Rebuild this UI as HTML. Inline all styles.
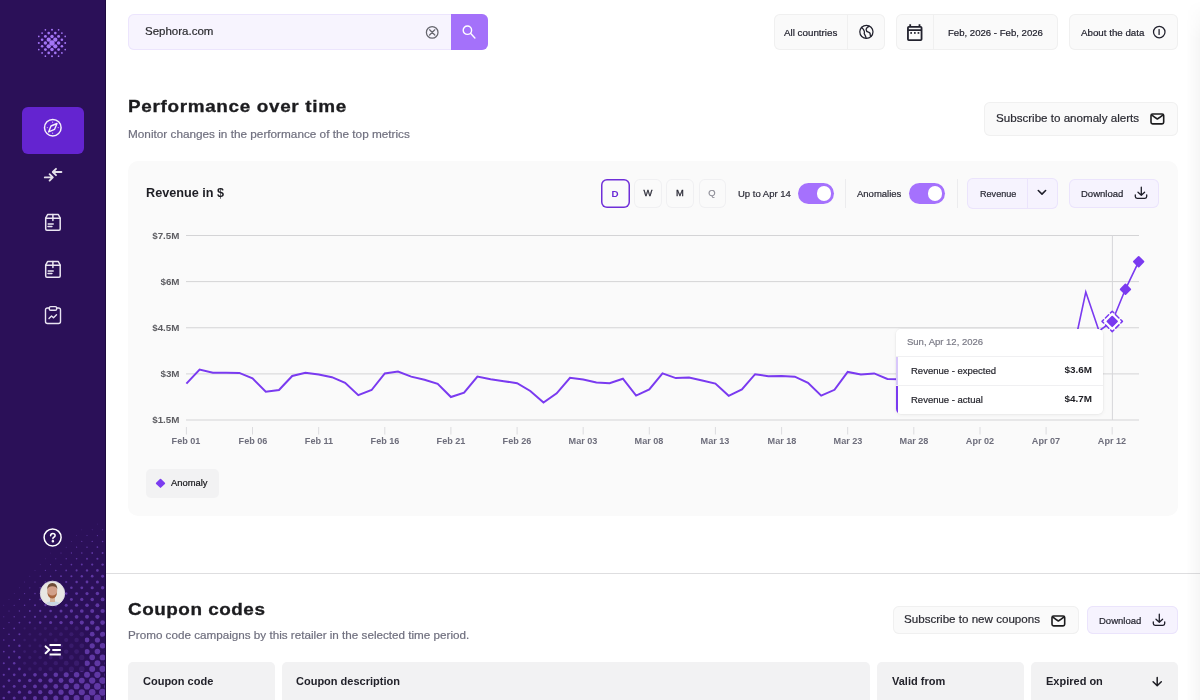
<!DOCTYPE html>
<html><head><meta charset="utf-8"><style>
html,body{margin:0;padding:0;}
body{width:1200px;height:700px;overflow:hidden;position:relative;background:#fff;font-family:"Liberation Sans", sans-serif;}
.t{position:absolute;white-space:nowrap;line-height:1;will-change:transform;}
.b{position:absolute;box-sizing:border-box;}
svg{position:absolute;overflow:visible;}
</style></head><body>
<div class="b" style="left:0px;top:0px;width:106px;height:700px;background:#2b1058;border-radius:0px;"></div><div class="b" style="left:105px;top:0px;width:1px;height:700px;background:#1d0a3f;border-radius:0px;"></div><svg style="left:0;top:0;overflow:hidden" width="105" height="700" viewBox="0 0 105 700"><g fill="#5f37a3"><circle cx="97.4" cy="524.0" r="0.37"/><circle cx="107.8" cy="524.0" r="0.45"/><circle cx="81.8" cy="529.8" r="0.33"/><circle cx="92.2" cy="529.8" r="0.43"/><circle cx="102.6" cy="529.8" r="0.53"/><circle cx="76.6" cy="535.6" r="0.38"/><circle cx="87.0" cy="535.6" r="0.50"/><circle cx="97.4" cy="535.6" r="0.60"/><circle cx="107.8" cy="535.6" r="0.69"/><circle cx="71.4" cy="541.4" r="0.43"/><circle cx="81.8" cy="541.4" r="0.55"/><circle cx="92.2" cy="541.4" r="0.66"/><circle cx="102.6" cy="541.4" r="0.76"/><circle cx="55.8" cy="547.2" r="0.33"/><circle cx="66.2" cy="547.2" r="0.47"/><circle cx="76.6" cy="547.2" r="0.60"/><circle cx="87.0" cy="547.2" r="0.72"/><circle cx="97.4" cy="547.2" r="0.83"/><circle cx="107.8" cy="547.2" r="0.92"/><circle cx="50.6" cy="553.0" r="0.36"/><circle cx="61.0" cy="553.0" r="0.51"/><circle cx="71.4" cy="553.0" r="0.65"/><circle cx="81.8" cy="553.0" r="0.77"/><circle cx="92.2" cy="553.0" r="0.89"/><circle cx="102.6" cy="553.0" r="0.99"/><circle cx="45.4" cy="558.8" r="0.39"/><circle cx="55.8" cy="558.8" r="0.54"/><circle cx="66.2" cy="558.8" r="0.69"/><circle cx="76.6" cy="558.8" r="0.82"/><circle cx="87.0" cy="558.8" r="0.95"/><circle cx="97.4" cy="558.8" r="1.06"/><circle cx="107.8" cy="558.8" r="1.16"/><circle cx="40.2" cy="564.6" r="0.40"/><circle cx="50.6" cy="564.6" r="0.56"/><circle cx="61.0" cy="564.6" r="0.72"/><circle cx="71.4" cy="564.6" r="0.86"/><circle cx="81.8" cy="564.6" r="0.99"/><circle cx="92.2" cy="564.6" r="1.12"/><circle cx="102.6" cy="564.6" r="1.22"/><circle cx="35.0" cy="570.4" r="0.41"/><circle cx="45.4" cy="570.4" r="0.58"/><circle cx="55.8" cy="570.4" r="0.74"/><circle cx="66.2" cy="570.4" r="0.90"/><circle cx="76.6" cy="570.4" r="1.04"/><circle cx="87.0" cy="570.4" r="1.17"/><circle cx="97.4" cy="570.4" r="1.28"/><circle cx="107.8" cy="570.4" r="1.39"/><circle cx="29.8" cy="576.2" r="0.42"/><circle cx="40.2" cy="576.2" r="0.59"/><circle cx="50.6" cy="576.2" r="0.76"/><circle cx="61.0" cy="576.2" r="0.92"/><circle cx="71.4" cy="576.2" r="1.07"/><circle cx="81.8" cy="576.2" r="1.21"/><circle cx="92.2" cy="576.2" r="1.34"/><circle cx="102.6" cy="576.2" r="1.45"/><circle cx="24.6" cy="582.0" r="0.42"/><circle cx="35.0" cy="582.0" r="0.60"/><circle cx="45.4" cy="582.0" r="0.78"/><circle cx="55.8" cy="582.0" r="0.94"/><circle cx="66.2" cy="582.0" r="1.10"/><circle cx="76.6" cy="582.0" r="1.25"/><circle cx="87.0" cy="582.0" r="1.39"/><circle cx="97.4" cy="582.0" r="1.51"/><circle cx="107.8" cy="582.0" r="1.62"/><circle cx="19.4" cy="587.8" r="0.41"/><circle cx="29.8" cy="587.8" r="0.60"/><circle cx="40.2" cy="587.8" r="0.78"/><circle cx="50.6" cy="587.8" r="0.96"/><circle cx="61.0" cy="587.8" r="1.12"/><circle cx="71.4" cy="587.8" r="1.28"/><circle cx="81.8" cy="587.8" r="1.42"/><circle cx="92.2" cy="587.8" r="1.56"/><circle cx="102.6" cy="587.8" r="1.68"/><circle cx="14.2" cy="593.6" r="0.39"/><circle cx="24.6" cy="593.6" r="0.59"/><circle cx="35.0" cy="593.6" r="0.78"/><circle cx="45.4" cy="593.6" r="0.96"/><circle cx="55.8" cy="593.6" r="1.14"/><circle cx="66.2" cy="593.6" r="1.30"/><circle cx="76.6" cy="593.6" r="1.46"/><circle cx="87.0" cy="593.6" r="1.60"/><circle cx="97.4" cy="593.6" r="1.73"/><circle cx="107.8" cy="593.6" r="1.85"/><circle cx="9.0" cy="599.4" r="0.37"/><circle cx="19.4" cy="599.4" r="0.58"/><circle cx="29.8" cy="599.4" r="0.77"/><circle cx="40.2" cy="599.4" r="0.96"/><circle cx="50.6" cy="599.4" r="1.14"/><circle cx="61.0" cy="599.4" r="1.32"/><circle cx="71.4" cy="599.4" r="1.48"/><circle cx="81.8" cy="599.4" r="1.63"/><circle cx="92.2" cy="599.4" r="1.77"/><circle cx="102.6" cy="599.4" r="1.90"/><circle cx="3.8" cy="605.2" r="0.35"/><circle cx="14.2" cy="605.2" r="0.56"/><circle cx="24.6" cy="605.2" r="0.76"/><circle cx="35.0" cy="605.2" r="0.95"/><circle cx="45.4" cy="605.2" r="1.14"/><circle cx="55.8" cy="605.2" r="1.33"/><circle cx="66.2" cy="605.2" r="1.50"/><circle cx="76.6" cy="605.2" r="1.66"/><circle cx="87.0" cy="605.2" r="1.81"/><circle cx="97.4" cy="605.2" r="1.95"/><circle cx="107.8" cy="605.2" r="2.07"/><circle cx="-1.4" cy="611.0" r="0.31"/><circle cx="9.0" cy="611.0" r="0.53"/><circle cx="19.4" cy="611.0" r="0.74"/><circle cx="29.8" cy="611.0" r="0.94"/><circle cx="40.2" cy="611.0" r="1.14"/><circle cx="50.6" cy="611.0" r="1.33"/><circle cx="61.0" cy="611.0" r="1.51"/><circle cx="71.4" cy="611.0" r="1.68"/><circle cx="81.8" cy="611.0" r="1.84"/><circle cx="92.2" cy="611.0" r="1.99"/><circle cx="102.6" cy="611.0" r="2.12"/><circle cx="3.8" cy="616.8" r="0.50"/><circle cx="14.2" cy="616.8" r="0.71"/><circle cx="24.6" cy="616.8" r="0.92"/><circle cx="35.0" cy="616.8" r="1.12"/><circle cx="45.4" cy="616.8" r="1.32"/><circle cx="55.8" cy="616.8" r="1.51"/><circle cx="66.2" cy="616.8" r="1.69"/><circle cx="76.6" cy="616.8" r="1.86"/><circle cx="87.0" cy="616.8" r="2.02"/><circle cx="97.4" cy="616.8" r="2.16"/><circle cx="107.8" cy="616.8" r="2.29"/><circle cx="-1.4" cy="622.6" r="0.46"/><circle cx="9.0" cy="622.6" r="0.68"/><circle cx="19.4" cy="622.6" r="0.89"/><circle cx="29.8" cy="622.6" r="1.10"/><circle cx="40.2" cy="622.6" r="1.31"/><circle cx="50.6" cy="622.6" r="1.50"/><circle cx="61.0" cy="622.6" r="1.69"/><circle cx="71.4" cy="622.6" r="1.87"/><circle cx="81.8" cy="622.6" r="2.04"/><circle cx="92.2" cy="622.6" r="2.20"/><circle cx="102.6" cy="622.6" r="2.34"/><circle cx="3.8" cy="628.4" r="0.64"/><circle cx="14.2" cy="628.4" r="0.86"/><circle cx="24.6" cy="628.4" r="1.07"/><circle cx="35.0" cy="628.4" r="1.28"/><circle cx="45.4" cy="628.4" r="1.49"/><circle cx="55.8" cy="628.4" r="1.68"/><circle cx="66.2" cy="628.4" r="1.87"/><circle cx="76.6" cy="628.4" r="2.05"/><circle cx="87.0" cy="628.4" r="2.22"/><circle cx="97.4" cy="628.4" r="2.37"/><circle cx="107.8" cy="628.4" r="2.51"/><circle cx="-1.4" cy="634.2" r="0.59"/><circle cx="9.0" cy="634.2" r="0.82"/><circle cx="19.4" cy="634.2" r="1.04"/><circle cx="29.8" cy="634.2" r="1.25"/><circle cx="40.2" cy="634.2" r="1.47"/><circle cx="50.6" cy="634.2" r="1.67"/><circle cx="61.0" cy="634.2" r="1.87"/><circle cx="71.4" cy="634.2" r="2.05"/><circle cx="81.8" cy="634.2" r="2.23"/><circle cx="92.2" cy="634.2" r="2.40"/><circle cx="102.6" cy="634.2" r="2.55"/><circle cx="3.8" cy="640.0" r="0.77"/><circle cx="14.2" cy="640.0" r="1.00"/><circle cx="24.6" cy="640.0" r="1.22"/><circle cx="35.0" cy="640.0" r="1.44"/><circle cx="45.4" cy="640.0" r="1.65"/><circle cx="55.8" cy="640.0" r="1.85"/><circle cx="66.2" cy="640.0" r="2.05"/><circle cx="76.6" cy="640.0" r="2.24"/><circle cx="87.0" cy="640.0" r="2.41"/><circle cx="97.4" cy="640.0" r="2.58"/><circle cx="107.8" cy="640.0" r="2.73"/><circle cx="-1.4" cy="645.8" r="0.72"/><circle cx="9.0" cy="645.8" r="0.95"/><circle cx="19.4" cy="645.8" r="1.18"/><circle cx="29.8" cy="645.8" r="1.40"/><circle cx="40.2" cy="645.8" r="1.62"/><circle cx="50.6" cy="645.8" r="1.83"/><circle cx="61.0" cy="645.8" r="2.03"/><circle cx="71.4" cy="645.8" r="2.23"/><circle cx="81.8" cy="645.8" r="2.42"/><circle cx="92.2" cy="645.8" r="2.59"/><circle cx="102.6" cy="645.8" r="2.76"/><circle cx="3.8" cy="651.6" r="0.89"/><circle cx="14.2" cy="651.6" r="1.13"/><circle cx="24.6" cy="651.6" r="1.35"/><circle cx="35.0" cy="651.6" r="1.58"/><circle cx="45.4" cy="651.6" r="1.80"/><circle cx="55.8" cy="651.6" r="2.01"/><circle cx="66.2" cy="651.6" r="2.22"/><circle cx="76.6" cy="651.6" r="2.41"/><circle cx="87.0" cy="651.6" r="2.60"/><circle cx="97.4" cy="651.6" r="2.77"/><circle cx="107.8" cy="651.6" r="2.93"/><circle cx="-1.4" cy="657.4" r="0.83"/><circle cx="9.0" cy="657.4" r="1.07"/><circle cx="19.4" cy="657.4" r="1.30"/><circle cx="29.8" cy="657.4" r="1.53"/><circle cx="40.2" cy="657.4" r="1.76"/><circle cx="50.6" cy="657.4" r="1.98"/><circle cx="61.0" cy="657.4" r="2.19"/><circle cx="71.4" cy="657.4" r="2.40"/><circle cx="81.8" cy="657.4" r="2.60"/><circle cx="92.2" cy="657.4" r="2.78"/><circle cx="102.6" cy="657.4" r="2.95"/><circle cx="3.8" cy="663.2" r="1.01"/><circle cx="14.2" cy="663.2" r="1.24"/><circle cx="24.6" cy="663.2" r="1.48"/><circle cx="35.0" cy="663.2" r="1.71"/><circle cx="45.4" cy="663.2" r="1.94"/><circle cx="55.8" cy="663.2" r="2.16"/><circle cx="66.2" cy="663.2" r="2.37"/><circle cx="76.6" cy="663.2" r="2.58"/><circle cx="87.0" cy="663.2" r="2.78"/><circle cx="97.4" cy="663.2" r="2.96"/><circle cx="107.8" cy="663.2" r="3.13"/><circle cx="-1.4" cy="669.0" r="0.94"/><circle cx="9.0" cy="669.0" r="1.18"/><circle cx="19.4" cy="669.0" r="1.42"/><circle cx="29.8" cy="669.0" r="1.66"/><circle cx="40.2" cy="669.0" r="1.89"/><circle cx="50.6" cy="669.0" r="2.12"/><circle cx="61.0" cy="669.0" r="2.34"/><circle cx="71.4" cy="669.0" r="2.56"/><circle cx="81.8" cy="669.0" r="2.76"/><circle cx="92.2" cy="669.0" r="2.96"/><circle cx="102.6" cy="669.0" r="3.14"/><circle cx="3.8" cy="674.8" r="1.11"/><circle cx="14.2" cy="674.8" r="1.35"/><circle cx="24.6" cy="674.8" r="1.59"/><circle cx="35.0" cy="674.8" r="1.83"/><circle cx="45.4" cy="674.8" r="2.07"/><circle cx="55.8" cy="674.8" r="2.30"/><circle cx="66.2" cy="674.8" r="2.52"/><circle cx="76.6" cy="674.8" r="2.74"/><circle cx="87.0" cy="674.8" r="2.95"/><circle cx="97.4" cy="674.8" r="3.14"/><circle cx="107.8" cy="674.8" r="3.33"/><circle cx="-1.4" cy="680.6" r="1.03"/><circle cx="9.0" cy="680.6" r="1.28"/><circle cx="19.4" cy="680.6" r="1.53"/><circle cx="29.8" cy="680.6" r="1.77"/><circle cx="40.2" cy="680.6" r="2.01"/><circle cx="50.6" cy="680.6" r="2.24"/><circle cx="61.0" cy="680.6" r="2.48"/><circle cx="71.4" cy="680.6" r="2.70"/><circle cx="81.8" cy="680.6" r="2.92"/><circle cx="92.2" cy="680.6" r="3.13"/><circle cx="102.6" cy="680.6" r="3.32"/><circle cx="3.8" cy="686.4" r="1.20"/><circle cx="14.2" cy="686.4" r="1.45"/><circle cx="24.6" cy="686.4" r="1.70"/><circle cx="35.0" cy="686.4" r="1.94"/><circle cx="45.4" cy="686.4" r="2.18"/><circle cx="55.8" cy="686.4" r="2.42"/><circle cx="66.2" cy="686.4" r="2.65"/><circle cx="76.6" cy="686.4" r="2.88"/><circle cx="87.0" cy="686.4" r="3.10"/><circle cx="97.4" cy="686.4" r="3.31"/><circle cx="107.8" cy="686.4" r="3.50"/><circle cx="-1.4" cy="692.2" r="1.12"/><circle cx="9.0" cy="692.2" r="1.37"/><circle cx="19.4" cy="692.2" r="1.62"/><circle cx="29.8" cy="692.2" r="1.87"/><circle cx="40.2" cy="692.2" r="2.11"/><circle cx="50.6" cy="692.2" r="2.36"/><circle cx="61.0" cy="692.2" r="2.60"/><circle cx="71.4" cy="692.2" r="2.83"/><circle cx="81.8" cy="692.2" r="3.06"/><circle cx="92.2" cy="692.2" r="3.28"/><circle cx="102.6" cy="692.2" r="3.49"/><circle cx="3.8" cy="698.0" r="1.28"/><circle cx="14.2" cy="698.0" r="1.53"/><circle cx="24.6" cy="698.0" r="1.79"/><circle cx="35.0" cy="698.0" r="2.04"/><circle cx="45.4" cy="698.0" r="2.29"/><circle cx="55.8" cy="698.0" r="2.53"/><circle cx="66.2" cy="698.0" r="2.77"/><circle cx="76.6" cy="698.0" r="3.01"/><circle cx="87.0" cy="698.0" r="3.24"/><circle cx="97.4" cy="698.0" r="3.46"/><circle cx="107.8" cy="698.0" r="3.50"/><circle cx="-1.4" cy="703.8" r="1.19"/><circle cx="9.0" cy="703.8" r="1.44"/><circle cx="19.4" cy="703.8" r="1.70"/><circle cx="29.8" cy="703.8" r="1.95"/><circle cx="40.2" cy="703.8" r="2.21"/><circle cx="50.6" cy="703.8" r="2.46"/><circle cx="61.0" cy="703.8" r="2.70"/><circle cx="71.4" cy="703.8" r="2.95"/><circle cx="81.8" cy="703.8" r="3.19"/><circle cx="92.2" cy="703.8" r="3.42"/><circle cx="102.6" cy="703.8" r="3.50"/></g></svg><div class="b" style="left:22px;top:625.5px;width:62.5px;height:45.5px;background:rgba(43,16,88,0.72);border-radius:0px;"></div><svg style="left:0;top:0" width="106" height="100"><g fill="#a375f5"><circle cx="38.80" cy="36.40" r="0.84"/><circle cx="38.80" cy="43.00" r="1.01"/><circle cx="38.80" cy="49.60" r="0.84"/><circle cx="42.10" cy="33.10" r="0.92"/><circle cx="42.10" cy="39.70" r="1.31"/><circle cx="42.10" cy="46.30" r="1.31"/><circle cx="42.10" cy="52.90" r="0.92"/><circle cx="45.40" cy="29.80" r="0.84"/><circle cx="45.40" cy="36.40" r="1.43"/><circle cx="45.40" cy="43.00" r="1.73"/><circle cx="45.40" cy="49.60" r="1.43"/><circle cx="45.40" cy="56.20" r="0.84"/><circle cx="48.70" cy="33.10" r="1.31"/><circle cx="48.70" cy="39.70" r="2.13"/><circle cx="48.70" cy="46.30" r="2.13"/><circle cx="48.70" cy="52.90" r="1.31"/><circle cx="52.00" cy="29.80" r="1.01"/><circle cx="52.00" cy="36.40" r="1.73"/><circle cx="52.00" cy="43.00" r="2.70"/><circle cx="52.00" cy="49.60" r="1.73"/><circle cx="52.00" cy="56.20" r="1.01"/><circle cx="55.30" cy="33.10" r="1.31"/><circle cx="55.30" cy="39.70" r="2.13"/><circle cx="55.30" cy="46.30" r="2.13"/><circle cx="55.30" cy="52.90" r="1.31"/><circle cx="58.60" cy="29.80" r="0.84"/><circle cx="58.60" cy="36.40" r="1.43"/><circle cx="58.60" cy="43.00" r="1.73"/><circle cx="58.60" cy="49.60" r="1.43"/><circle cx="58.60" cy="56.20" r="0.84"/><circle cx="61.90" cy="33.10" r="0.92"/><circle cx="61.90" cy="39.70" r="1.31"/><circle cx="61.90" cy="46.30" r="1.31"/><circle cx="61.90" cy="52.90" r="0.92"/><circle cx="65.20" cy="36.40" r="0.84"/><circle cx="65.20" cy="43.00" r="1.01"/><circle cx="65.20" cy="49.60" r="0.84"/></g></svg><div class="b" style="left:22px;top:107px;width:62px;height:47px;background:#6424d0;border-radius:6px;"></div><svg style="left:43px;top:118px" width="20" height="20" viewBox="0 0 20 20" fill="none" stroke="#f4f0fa" stroke-width="1.5"><circle cx="9.8" cy="9.7" r="8.3"/><path d="M14 5.5 L11.6 11.3 L5.6 13.9 L8 8 Z" stroke-linejoin="round" stroke-width="1.4"/><g fill="#f4f0fa" stroke="none" opacity="0.8"><circle cx="9.6" cy="4.2" r="0.6"/><circle cx="15.2" cy="9.6" r="0.6"/><circle cx="9.6" cy="15.2" r="0.6"/><circle cx="4.3" cy="9.6" r="0.6"/></g></svg><svg style="left:42px;top:166px" width="22" height="17" viewBox="0 0 22 17" fill="none" stroke="#e4e0ea" stroke-width="1.9" stroke-linecap="round" stroke-linejoin="round"><path d="M2.8 11.4 H10.4 M7.6 8.2 L10.8 11.4 L7.6 14.6"/><path d="M19.4 6 H11 M14 2.8 L10.8 6 L14 9.2"/></svg><svg style="left:44px;top:213px" width="18" height="19" viewBox="0 0 18 19" fill="none" stroke="#ebe6f2" stroke-width="1.5" stroke-linejoin="round" stroke-linecap="round"><path d="M1.7 5.2 L3.6 1.5 H14.3 L16.2 5.2 V16.1 Q16.2 17.3 15 17.3 H2.9 Q1.7 17.3 1.7 16.1 Z"/><path d="M1.7 5.2 H16.2 M8.9 1.5 V7.4 M4.2 11 H9.2 M4 13.5 H7.9"/></svg><svg style="left:44px;top:260px" width="18" height="19" viewBox="0 0 18 19" fill="none" stroke="#ebe6f2" stroke-width="1.5" stroke-linejoin="round" stroke-linecap="round"><path d="M1.7 5.2 L3.6 1.5 H14.3 L16.2 5.2 V16.1 Q16.2 17.3 15 17.3 H2.9 Q1.7 17.3 1.7 16.1 Z"/><path d="M1.7 5.2 H16.2 M8.9 1.5 V7.4 M4.2 11 H9.2 M4 13.5 H7.9"/></svg><svg style="left:44px;top:305px" width="18" height="20" viewBox="0 0 18 20" fill="none" stroke="#e9e4f2" stroke-width="1.4" stroke-linejoin="round" stroke-linecap="round"><path d="M5.5 3 H3.5 Q1.5 3 1.5 5 V16.5 Q1.5 18.5 3.5 18.5 H14.5 Q16.5 18.5 16.5 16.5 V5 Q16.5 3 14.5 3 H12.5"/><rect x="5.3" y="1.6" width="7.4" height="3.6" rx="1.3"/><path d="M5 13.5 L7.5 11 L9.5 12.8 L12.5 9.8"/></svg><svg style="left:43px;top:527px" width="20" height="20" viewBox="0 0 20 20" fill="none" stroke="#fff" stroke-width="1.5" stroke-linecap="round"><circle cx="9.6" cy="10.4" r="8.5"/><path d="M7.6 8.8 Q7.6 6.5 9.8 6.5 Q12.1 6.5 12.1 8.5 Q12.1 9.7 10.9 10.2 Q9.9 10.6 9.9 11.8"/><circle cx="9.9" cy="14.2" r="0.55" fill="#fff"/></svg><svg style="left:40px;top:581px" width="26" height="26" viewBox="0 0 26 26"><defs><clipPath id="av"><circle cx="12.5" cy="12.4" r="12.2"/></clipPath></defs><g clip-path="url(#av)"><rect width="26" height="26" fill="#e8e7e3"/><ellipse cx="12.8" cy="25.5" rx="8.5" ry="5.5" fill="#c9d7e2"/><rect x="10" y="16" width="5" height="5" fill="#d8b49c"/><ellipse cx="12.2" cy="10" rx="5" ry="6.3" fill="#d2a08a"/><path d="M7.2 8.5 Q7.2 1.8 12.4 1.9 Q17.4 2 17.3 8.5 Q16.3 5.2 12.4 5.3 Q8.6 5.2 7.2 8.5 Z" fill="#6e4c36"/><path d="M7.4 11 Q7.8 17.4 12.2 17.4 Q16.7 17.4 17.1 11 Q15.8 14.6 12.2 14.4 Q8.8 14.6 7.4 11 Z" fill="#a4623e"/></g><circle cx="12.5" cy="12.4" r="12.2" fill="none" stroke="#dcd8e2" stroke-width="0.9"/></svg><svg style="left:43px;top:642px" width="20" height="15" viewBox="0 0 20 15" fill="none" stroke="#fff" stroke-width="2" stroke-linejoin="round"><path d="M2.6 4.4 L6.3 7.8 L2.6 11.2" stroke-linecap="round"/><path d="M6.5 3.1 H17.8 M9.3 7.9 H17.8 M6.5 12.4 H17.8"/></svg><div class="b" style="left:128px;top:14px;width:360px;height:36px;background:#f7f4fe;border-radius:6px;box-shadow:inset 0 0 0 1px #ece5fd;"></div><div class="b" style="left:451px;top:14px;width:37px;height:36px;background:#a471fa;border-radius:6px;border-top-left-radius:0;border-bottom-left-radius:0;"></div><div class="t" style="top:26.27px;font-size:11.5px;font-weight:400;color:#2a2a2e;-webkit-text-stroke:0.2px #2a2a2e;left:144.8px;">Sephora.com</div><svg style="left:425px;top:25px" width="14" height="14" viewBox="0 0 14 14" fill="none" stroke="#66666e" stroke-width="1.25" stroke-linecap="round"><circle cx="7.2" cy="7.4" r="5.8"/><path d="M4.6 4.8 L9.8 10 M9.8 4.8 L4.6 10"/></svg><svg style="left:461px;top:24px" width="16" height="16" viewBox="0 0 16 16" fill="none" stroke="#fff" stroke-width="1.4" stroke-linecap="round"><circle cx="6.4" cy="6.2" r="4.2"/><path d="M9.5 9.3 L13.9 13.9"/></svg><div class="b" style="left:773.5px;top:14px;width:111.5px;height:35.5px;background:#fafafa;border-radius:6px;box-shadow:inset 0 0 0 1px #f0f0f0;"></div><div class="b" style="left:847px;top:14px;width:1px;height:35.5px;background:#f0f0f0;border-radius:0px;"></div><div class="t" style="top:27.90px;font-size:9.8px;font-weight:400;color:#22222e;-webkit-text-stroke:0.2px #22222e;left:784.3px;">All countries</div><svg style="left:858px;top:24px" width="17" height="17" viewBox="0 0 17 17" fill="none" stroke="#22222e" stroke-width="1.25" stroke-linejoin="round" stroke-linecap="round"><circle cx="8.4" cy="7.85" r="6.6"/><path d="M3.4 3.3 Q5.6 5.2 6.3 7.2 Q6.6 8.6 6.2 9.6 Q7.6 11.8 8.2 14.4"/><path d="M11.3 2.3 Q8.4 3.2 8.1 5.6 Q8.2 7.6 10.4 8.2 Q12.6 8.8 12.2 11 L12.8 12.4"/></svg><div class="b" style="left:896px;top:14px;width:162px;height:35.5px;background:#fafafa;border-radius:6px;box-shadow:inset 0 0 0 1px #f0f0f0;"></div><div class="b" style="left:933px;top:14px;width:1px;height:35.5px;background:#f0f0f0;border-radius:0px;"></div><svg style="left:906px;top:23px" width="18" height="19" viewBox="0 0 18 19" fill="none" stroke="#22222e" stroke-width="1.8" stroke-linecap="round"><rect x="1.95" y="3.9" width="13.6" height="13.3" rx="0.9"/><path d="M1.95 7.1 H15.55 M4.2 1.2 V3.9 M13.5 1.2 V3.9" stroke-linecap="butt"/><g fill="#22222e" stroke="none"><rect x="4.3" y="9.1" width="1.7" height="1.7"/><rect x="8" y="9.1" width="1.7" height="1.7"/><rect x="11.6" y="9.1" width="1.7" height="1.7"/></g></svg><div class="t" style="top:28.07px;font-size:9.6px;font-weight:400;color:#22222e;-webkit-text-stroke:0.2px #22222e;left:948.4px;">Feb, 2026 - Feb, 2026</div><div class="b" style="left:1069.4px;top:14px;width:108.19999999999982px;height:35.5px;background:#fafafa;border-radius:6px;box-shadow:inset 0 0 0 1px #f0f0f0;"></div><div class="t" style="top:27.95px;font-size:9.75px;font-weight:400;color:#22222e;-webkit-text-stroke:0.2px #22222e;left:1081px;">About the data</div><svg style="left:1151px;top:24px" width="16" height="16" viewBox="0 0 16 16" fill="none" stroke="#22222e" stroke-width="1.25" stroke-linecap="round"><circle cx="8.25" cy="8" r="5.75"/><path d="M8.1 5.6 V10.4" stroke-width="1.3"/></svg><div class="t" style="top:98.20px;font-size:16.3px;font-weight:700;color:#1c1c1f;letter-spacing:0.58px;transform:scaleX(1.16);transform-origin:0 0;left:128px;-webkit-text-stroke:0.3px #1c1c1f;">Performance over time</div><div class="t" style="top:128.03px;font-size:11.78px;font-weight:400;color:#6f6f7e;-webkit-text-stroke:0.2px #6f6f7e;left:128px;">Monitor changes in the performance of the top metrics</div><div class="b" style="left:984.4px;top:102.4px;width:193.19999999999993px;height:33.19999999999999px;background:#fafafa;border-radius:6px;box-shadow:inset 0 0 0 1px #f0f0f0;"></div><div class="t" style="top:112.48px;font-size:11.6px;font-weight:400;color:#2a2a32;-webkit-text-stroke:0.2px #2a2a32;left:996px;">Subscribe to anomaly alerts</div><svg style="left:1150.3px;top:112.8px" width="14.7" height="11.9" viewBox="0 0 14.7 11.9" fill="none" stroke="#1c1c1e" stroke-width="1.6" stroke-linejoin="round" stroke-linecap="round"><rect x="1" y="1" width="12.7" height="9.9" rx="1.6"/><path d="M1.9 2.1 Q4.5 4.2 7.35 6.0 Q10.20 4.2 12.80 2.1"/></svg><div class="b" style="left:128px;top:161px;width:1050px;height:355px;background:#fafafa;border-radius:10px;"></div><div class="t" style="top:186.64px;font-size:12px;font-weight:700;color:#1e1e24;transform:scaleX(1.055);transform-origin:0 0;left:146px;">Revenue in $</div><div class="b" style="left:601px;top:179px;width:29px;height:29px;background:#fafafa;border-radius:6px;box-shadow:inset 0 0 0 1px #6f2fd8;box-shadow:inset 0 0 0 1.5px #6f2fd8;"></div><div class="t" style="top:188.90px;font-size:9.8px;font-weight:700;color:#6a2ad6;left:415.29999999999995px;width:400px;text-align:center;">D</div><div class="b" style="left:633.5px;top:179px;width:28.0px;height:29px;background:#fafafa;border-radius:6px;box-shadow:inset 0 0 0 1px #f0f0f2;"></div><div class="t" style="top:187.94px;font-size:9.4px;font-weight:400;color:#2a2a36;left:447.79999999999995px;width:400px;text-align:center;-webkit-text-stroke:0.3px #2a2a36;">W</div><div class="b" style="left:666px;top:179px;width:27.5px;height:29px;background:#fafafa;border-radius:6px;box-shadow:inset 0 0 0 1px #f0f0f2;"></div><div class="t" style="top:187.94px;font-size:9.4px;font-weight:400;color:#2a2a36;left:480.04999999999995px;width:400px;text-align:center;-webkit-text-stroke:0.3px #2a2a36;">M</div><div class="b" style="left:698.6px;top:179px;width:27.699999999999932px;height:29px;background:#fafafa;border-radius:6px;box-shadow:inset 0 0 0 1px #f0f0f2;"></div><div class="t" style="top:187.94px;font-size:9.4px;font-weight:400;color:#8a8a94;-webkit-text-stroke:0.2px #8a8a94;left:511.95000000000005px;width:400px;text-align:center;">Q</div><div class="t" style="top:188.96px;font-size:9.5px;font-weight:400;color:#2a2a36;-webkit-text-stroke:0.2px #2a2a36;left:737.7px;">Up to Apr 14</div><div class="b" style="left:798px;top:183px;width:36px;height:21px;background:#a571fd;border-radius:11px;"></div><div class="b" style="left:816.6px;top:186.3px;width:14.4px;height:14.4px;border-radius:50%;background:#fff;"></div><div class="b" style="left:845px;top:179px;width:1px;height:29px;background:#ececee;border-radius:0px;"></div><div class="t" style="top:188.96px;font-size:9.5px;font-weight:400;color:#2a2a36;-webkit-text-stroke:0.2px #2a2a36;left:857px;">Anomalies</div><div class="b" style="left:909px;top:183px;width:36px;height:21px;background:#a571fd;border-radius:11px;"></div><div class="b" style="left:927.6px;top:186.3px;width:14.4px;height:14.4px;border-radius:50%;background:#fff;"></div><div class="b" style="left:956.5px;top:179px;width:1.0px;height:29px;background:#ececee;border-radius:0px;"></div><div class="b" style="left:967px;top:178px;width:90.5px;height:31px;background:#f6f3fe;border-radius:6px;box-shadow:inset 0 0 0 1px #ebe4fc;"></div><div class="b" style="left:1027px;top:178px;width:1px;height:31px;background:#ebe4fc;border-radius:0px;"></div><div class="t" style="top:190.10px;font-size:9.1px;font-weight:400;color:#2a2a36;-webkit-text-stroke:0.2px #2a2a36;left:979.6px;">Revenue</div><svg style="left:1036px;top:188px" width="12" height="9" viewBox="0 0 12 9" fill="none" stroke="#1f1f2a" stroke-width="1.6" stroke-linecap="round" stroke-linejoin="round"><path d="M2.3 2.5 L6 6.1 L9.6 2.5"/></svg><div class="b" style="left:1069.4px;top:179px;width:90.09999999999991px;height:28.5px;background:#f6f3fe;border-radius:6px;box-shadow:inset 0 0 0 1px #ebe4fc;"></div><div class="t" style="top:188.96px;font-size:9.5px;font-weight:400;color:#1f1f2a;-webkit-text-stroke:0.2px #1f1f2a;left:1080.8px;">Download</div><svg style="left:1133px;top:185px" width="16" height="16" viewBox="0 0 16 16" fill="none" stroke="#1f1f2a" stroke-width="1.3" stroke-linecap="round" stroke-linejoin="round"><path d="M8.3 2.2 V10.1 M5 7.2 L8.3 10.3 L11.6 7.2"/><path d="M2.3 9.8 V11.6 Q2.3 13.4 4.1 13.4 H12 Q13.7 13.4 13.7 11.6 V9.8"/></svg><div class="t" style="top:230.86px;font-size:9.5px;font-weight:700;color:#5d5d62;transform:scaleX(1.03);transform-origin:100% 0;right:1021px;">$7.5M</div><div class="t" style="top:276.96px;font-size:9.5px;font-weight:700;color:#5d5d62;transform:scaleX(1.03);transform-origin:100% 0;right:1021px;">$6M</div><div class="t" style="top:323.11px;font-size:9.5px;font-weight:700;color:#5d5d62;transform:scaleX(1.03);transform-origin:100% 0;right:1021px;">$4.5M</div><div class="t" style="top:369.26px;font-size:9.5px;font-weight:700;color:#5d5d62;transform:scaleX(1.03);transform-origin:100% 0;right:1021px;">$3M</div><div class="t" style="top:415.36px;font-size:9.5px;font-weight:700;color:#5d5d62;transform:scaleX(1.03);transform-origin:100% 0;right:1021px;">$1.5M</div><div class="t" style="top:436.90px;font-size:9.1px;font-weight:700;color:#6e6e7c;left:-13.599999999999994px;width:400px;text-align:center;">Feb 01</div><div class="t" style="top:436.90px;font-size:9.1px;font-weight:700;color:#6e6e7c;left:52.53000000000003px;width:400px;text-align:center;">Feb 06</div><div class="t" style="top:436.90px;font-size:9.1px;font-weight:700;color:#6e6e7c;left:118.66000000000003px;width:400px;text-align:center;">Feb 11</div><div class="t" style="top:436.90px;font-size:9.1px;font-weight:700;color:#6e6e7c;left:184.79000000000002px;width:400px;text-align:center;">Feb 16</div><div class="t" style="top:436.90px;font-size:9.1px;font-weight:700;color:#6e6e7c;left:250.92000000000007px;width:400px;text-align:center;">Feb 21</div><div class="t" style="top:436.90px;font-size:9.1px;font-weight:700;color:#6e6e7c;left:317.05000000000007px;width:400px;text-align:center;">Feb 26</div><div class="t" style="top:436.90px;font-size:9.1px;font-weight:700;color:#6e6e7c;left:383.18000000000006px;width:400px;text-align:center;">Mar 03</div><div class="t" style="top:436.90px;font-size:9.1px;font-weight:700;color:#6e6e7c;left:449.31000000000006px;width:400px;text-align:center;">Mar 08</div><div class="t" style="top:436.90px;font-size:9.1px;font-weight:700;color:#6e6e7c;left:515.44px;width:400px;text-align:center;">Mar 13</div><div class="t" style="top:436.90px;font-size:9.1px;font-weight:700;color:#6e6e7c;left:581.57px;width:400px;text-align:center;">Mar 18</div><div class="t" style="top:436.90px;font-size:9.1px;font-weight:700;color:#6e6e7c;left:647.7px;width:400px;text-align:center;">Mar 23</div><div class="t" style="top:436.90px;font-size:9.1px;font-weight:700;color:#6e6e7c;left:713.83px;width:400px;text-align:center;">Mar 28</div><div class="t" style="top:436.90px;font-size:9.1px;font-weight:700;color:#6e6e7c;left:779.96px;width:400px;text-align:center;">Apr 02</div><div class="t" style="top:436.90px;font-size:9.1px;font-weight:700;color:#6e6e7c;left:846.0900000000001px;width:400px;text-align:center;">Apr 07</div><div class="t" style="top:436.90px;font-size:9.1px;font-weight:700;color:#6e6e7c;left:912.22px;width:400px;text-align:center;">Apr 12</div><svg style="left:0;top:0" width="1200" height="700"><line x1="186" y1="235.5" x2="1139" y2="235.5" stroke="#d4d4d6" stroke-width="1"/><line x1="186" y1="281.6" x2="1139" y2="281.6" stroke="#d4d4d6" stroke-width="1"/><line x1="186" y1="327.75" x2="1139" y2="327.75" stroke="#d4d4d6" stroke-width="1"/><line x1="186" y1="373.9" x2="1139" y2="373.9" stroke="#d4d4d6" stroke-width="1"/><line x1="186" y1="420.0" x2="1139" y2="420.0" stroke="#d4d4d6" stroke-width="1"/><line x1="186.4" y1="427" x2="186.4" y2="434.5" stroke="#dcdcdf" stroke-width="1"/><line x1="252.5" y1="427" x2="252.5" y2="434.5" stroke="#dcdcdf" stroke-width="1"/><line x1="318.7" y1="427" x2="318.7" y2="434.5" stroke="#dcdcdf" stroke-width="1"/><line x1="384.8" y1="427" x2="384.8" y2="434.5" stroke="#dcdcdf" stroke-width="1"/><line x1="450.9" y1="427" x2="450.9" y2="434.5" stroke="#dcdcdf" stroke-width="1"/><line x1="517.1" y1="427" x2="517.1" y2="434.5" stroke="#dcdcdf" stroke-width="1"/><line x1="583.2" y1="427" x2="583.2" y2="434.5" stroke="#dcdcdf" stroke-width="1"/><line x1="649.3" y1="427" x2="649.3" y2="434.5" stroke="#dcdcdf" stroke-width="1"/><line x1="715.4" y1="427" x2="715.4" y2="434.5" stroke="#dcdcdf" stroke-width="1"/><line x1="781.6" y1="427" x2="781.6" y2="434.5" stroke="#dcdcdf" stroke-width="1"/><line x1="847.7" y1="427" x2="847.7" y2="434.5" stroke="#dcdcdf" stroke-width="1"/><line x1="913.8" y1="427" x2="913.8" y2="434.5" stroke="#dcdcdf" stroke-width="1"/><line x1="980.0" y1="427" x2="980.0" y2="434.5" stroke="#dcdcdf" stroke-width="1"/><line x1="1046.1" y1="427" x2="1046.1" y2="434.5" stroke="#dcdcdf" stroke-width="1"/><line x1="1112.2" y1="427" x2="1112.2" y2="434.5" stroke="#dcdcdf" stroke-width="1"/><line x1="1112.4" y1="235" x2="1112.4" y2="420" stroke="#d6d6d9" stroke-width="1"/><polyline points="186.4,383.6 199.6,369.6 212.9,372.7 226.1,372.7 239.3,372.9 252.5,378.3 265.8,391.8 279.0,390.0 292.2,376.0 305.4,372.7 318.7,374.4 331.9,377.2 345.1,382.8 358.3,395.2 371.6,390.0 384.8,373.4 398.0,371.6 411.2,376.6 424.5,379.7 437.7,383.8 450.9,397.0 464.1,392.6 477.4,376.6 490.6,379.3 503.8,381.2 517.1,383.2 530.3,391.0 543.5,402.6 556.7,393.3 570.0,377.8 583.2,379.5 596.4,382.4 609.6,383.2 622.9,378.7 636.1,395.6 649.3,389.4 662.5,373.4 675.8,378.1 689.0,377.4 702.2,380.4 715.4,383.6 728.7,395.8 741.9,389.4 755.1,374.2 768.3,376.2 781.6,376.0 794.8,376.7 808.0,382.8 821.2,395.6 834.5,389.8 847.7,371.9 860.9,374.6 874.2,373.4 887.4,378.9 900.6,379.3 913.8,392.0 927.1,404.0 940.3,395.0 953.5,378.0 966.7,380.0 980.0,383.0 993.2,384.0 1006.4,392.0 1019.6,403.0 1032.9,394.0 1046.1,378.0 1059.3,372.0" fill="none" stroke="#7a3af0" stroke-width="2" stroke-linejoin="miter" stroke-miterlimit="3"/><polyline points="1059.3,372.0 1072.5,354.0 1085.8,292.0 1099.0,331.0 1112.2,321.5 1125.4,289.3 1138.7,261.7" fill="none" stroke="#7a3af0" stroke-width="1.6" stroke-linejoin="miter" stroke-miterlimit="4"/><path d="M1112.22 312.00 L1121.62 321.40 L1112.22 330.80 L1102.82 321.40 Z" fill="#fff"/><path d="M1112.22 311.20 L1122.42 321.40 L1112.22 331.60 L1102.02 321.40 Z" fill="none" stroke="#7a3af0" stroke-width="1.5" stroke-dasharray="4.6 2.6" stroke-dashoffset="2.3" stroke-linejoin="round" stroke-linecap="round"/><path d="M1112.22 316.60 L1117.02 321.40 L1112.22 326.20 L1107.42 321.40 Z" fill="#7a3af0" stroke="#7a3af0" stroke-width="1.8" stroke-linejoin="round"/><path d="M1125.45 284.50 L1130.25 289.30 L1125.45 294.10 L1120.65 289.30 Z" fill="#7a3af0" stroke="#7a3af0" stroke-width="1.8" stroke-linejoin="round"/><path d="M1138.67 256.90 L1143.47 261.70 L1138.67 266.50 L1133.87 261.70 Z" fill="#7a3af0" stroke="#7a3af0" stroke-width="1.8" stroke-linejoin="round"/></svg><div class="b" style="left:896px;top:328.6px;width:207px;height:85.7px;background:#fff;border-radius:5px;box-shadow:0 1px 4px rgba(0,0,0,0.06),0 0 0 1px rgba(0,0,0,0.025);overflow:hidden;"><div style="position:absolute;left:0;top:27.5px;width:207px;height:1px;background:#f0f0f2"></div><div style="position:absolute;left:0;top:56.6px;width:207px;height:1px;background:#f0f0f2"></div><div style="position:absolute;left:0;top:28px;width:2px;height:28.6px;background:#d8c7fb"></div><div style="position:absolute;left:0;top:57.4px;width:2px;height:28.6px;background:#7a3af0"></div></div><div class="t" style="top:336.96px;font-size:9.5px;font-weight:400;color:#7a7a86;-webkit-text-stroke:0.2px #7a7a86;left:907px;">Sun, Apr 12, 2026</div><div class="t" style="top:365.96px;font-size:9.5px;font-weight:400;color:#26262e;-webkit-text-stroke:0.2px #26262e;left:910.9px;">Revenue - expected</div><div class="t" style="top:366.18px;font-size:9px;font-weight:700;color:#1e1e24;transform:scaleX(1.1);transform-origin:100% 0;right:107.79999999999995px;">$3.6M</div><div class="t" style="top:394.76px;font-size:9.5px;font-weight:400;color:#26262e;-webkit-text-stroke:0.2px #26262e;left:910.9px;">Revenue - actual</div><div class="t" style="top:394.88px;font-size:9px;font-weight:700;color:#1e1e24;transform:scaleX(1.1);transform-origin:100% 0;right:107.79999999999995px;">$4.7M</div><div class="b" style="left:146.3px;top:469px;width:72.5px;height:28.5px;background:#f2f2f3;border-radius:5px;"></div><svg style="left:150px;top:473px" width="20" height="20"><path d="M10.5 6.6 L14.3 10.3 L10.5 14 L6.7 10.3 Z" fill="#7b3cf0" stroke="#7b3cf0" stroke-width="1.7" stroke-linejoin="round"/></svg><div class="t" style="top:477.84px;font-size:9.4px;font-weight:400;color:#141418;-webkit-text-stroke:0.2px #141418;left:171.3px;">Anomaly</div><div class="b" style="left:106px;top:573px;width:1094px;height:1px;background:#dedee0;border-radius:0px;"></div><div class="t" style="top:600.60px;font-size:16.3px;font-weight:700;color:#1c1c1f;letter-spacing:0.45px;transform:scaleX(1.16);transform-origin:0 0;left:128px;-webkit-text-stroke:0.3px #1c1c1f;">Coupon codes</div><div class="t" style="top:628.81px;font-size:11.68px;font-weight:400;color:#6f6f7e;-webkit-text-stroke:0.2px #6f6f7e;left:128px;">Promo code campaigns by this retailer in the selected time period.</div><div class="b" style="left:892.5px;top:606.3px;width:186.29999999999995px;height:28.200000000000045px;background:#fafafa;border-radius:6px;box-shadow:inset 0 0 0 1px #f0f0f0;"></div><div class="t" style="top:613.18px;font-size:11.6px;font-weight:400;color:#2a2a32;-webkit-text-stroke:0.2px #2a2a32;left:903.8px;">Subscribe to new coupons</div><svg style="left:1051.3px;top:614.8px" width="14.7" height="11.9" viewBox="0 0 14.7 11.9" fill="none" stroke="#1c1c1e" stroke-width="1.6" stroke-linejoin="round" stroke-linecap="round"><rect x="1" y="1" width="12.7" height="9.9" rx="1.6"/><path d="M1.9 2.1 Q4.5 4.2 7.35 6.0 Q10.20 4.2 12.80 2.1"/></svg><div class="b" style="left:1087px;top:606.3px;width:91px;height:28.200000000000045px;background:#f6f3fe;border-radius:6px;box-shadow:inset 0 0 0 1px #ebe4fc;"></div><div class="t" style="top:616.26px;font-size:9.5px;font-weight:400;color:#1f1f2a;-webkit-text-stroke:0.2px #1f1f2a;left:1098.8px;">Download</div><svg style="left:1151.3px;top:612px" width="16" height="16" viewBox="0 0 16 16" fill="none" stroke="#1f1f2a" stroke-width="1.3" stroke-linecap="round" stroke-linejoin="round"><path d="M8.3 2.2 V10.1 M5 7.2 L8.3 10.3 L11.6 7.2"/><path d="M2.3 9.8 V11.6 Q2.3 13.4 4.1 13.4 H12 Q13.7 13.4 13.7 11.6 V9.8"/></svg><div class="b" style="left:128.2px;top:662.3px;width:146.60000000000002px;height:49.700000000000045px;background:#f2f2f3;border-radius:5px;"></div><div class="t" style="top:675.69px;font-size:11px;font-weight:700;color:#22222a;left:142.79999999999998px;">Coupon code</div><div class="b" style="left:281.8px;top:662.3px;width:587.8px;height:49.700000000000045px;background:#f2f2f3;border-radius:5px;"></div><div class="t" style="top:675.69px;font-size:11px;font-weight:700;color:#22222a;left:296.40000000000003px;">Coupon description</div><div class="b" style="left:877px;top:662.3px;width:147.20000000000005px;height:49.700000000000045px;background:#f2f2f3;border-radius:5px;"></div><div class="t" style="top:675.69px;font-size:11px;font-weight:700;color:#22222a;left:891.6px;">Valid from</div><div class="b" style="left:1031px;top:662.3px;width:147.20000000000005px;height:49.700000000000045px;background:#f2f2f3;border-radius:5px;"></div><div class="t" style="top:675.69px;font-size:11px;font-weight:700;color:#22222a;left:1045.6px;">Expired on</div><svg style="left:1150px;top:675px" width="14" height="15" viewBox="0 0 14 15" fill="none" stroke="#1c1c22" stroke-width="1.5" stroke-linecap="round" stroke-linejoin="round"><path d="M7.2 2.6 V10.6 M3.1 6.8 L7.2 10.8 L11.3 6.8"/></svg><div class="b" style="left:1186px;top:0;width:14px;height:700px;background:linear-gradient(to right,rgba(0,0,0,0),rgba(0,0,0,0.035));-webkit-mask-image:linear-gradient(to bottom,transparent 0,#000 40px);"></div>
</body></html>
